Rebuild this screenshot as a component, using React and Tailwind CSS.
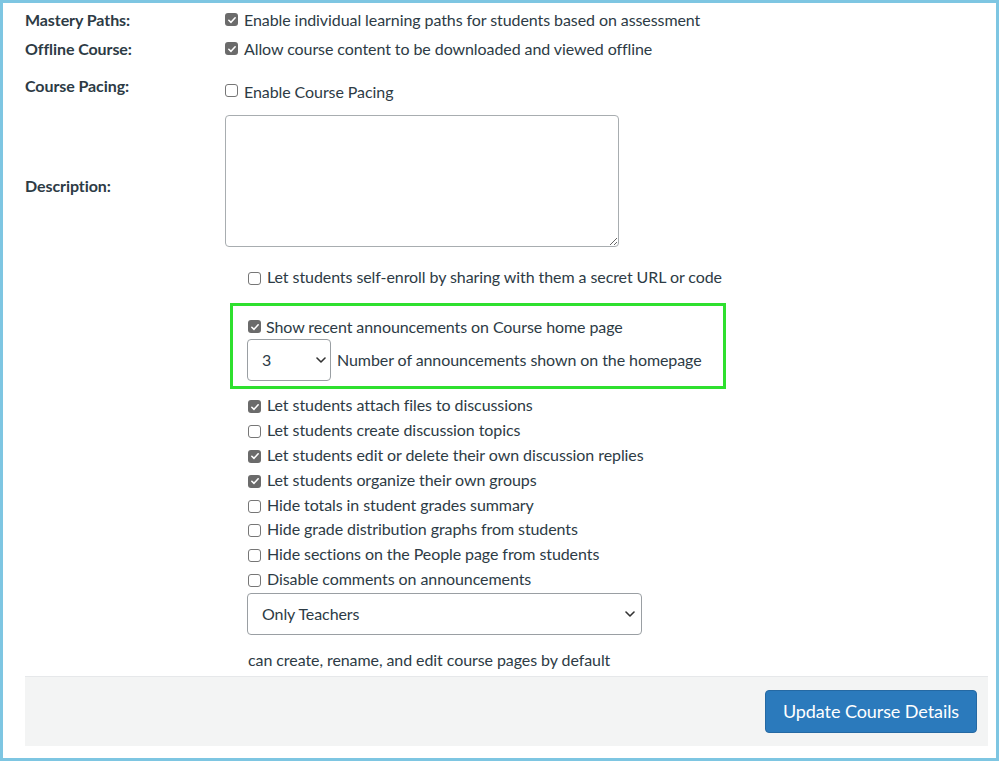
import React from 'react';

const font = { fontFamily: 'Lato, "Noto Sans", sans-serif' };

function Box({ checked }) {
  if (checked) {
    return (
      <span className="inline-flex w-[13px] h-[13px] shrink-0 items-center justify-center rounded-[3px] bg-[#6b6b6b]">
        <svg viewBox="0 0 12 12" className="w-[10px] h-[10px]">
          <path d="M2.2 6.3 4.8 8.8 9.8 3.3" fill="none" stroke="#fff" strokeWidth="1.9" strokeLinecap="round" strokeLinejoin="round" />
        </svg>
      </span>
    );
  }
  return <span className="inline-block w-[13px] h-[13px] shrink-0 rounded-[3px] border border-[#767676] bg-white" />;
}

function Chevron() {
  return (
    <svg viewBox="0 0 10 6" className="w-[10px] h-[6px]">
      <path d="M1 1 5 5 9 1" fill="none" stroke="#333" strokeWidth="1.6" strokeLinecap="round" strokeLinejoin="round" />
    </svg>
  );
}

const options = [
  ["Let students attach files to discussions", true],
  ["Let students create discussion topics", false],
  ["Let students edit or delete their own discussion replies", true],
  ["Let students organize their own groups", true],
  ["Hide totals in student grades summary", false],
  ["Hide grade distribution graphs from students", false],
  ["Hide sections on the People page from students", false],
  ["Disable comments on announcements", false],
];

export default function App() {
  return (
    <div style={font} className="w-[999px] h-[761px] bg-white border-[3px] border-[#7ec6e2] pl-[22px] text-[16px] tracking-[-0.08px] text-[#2d3b45] overflow-hidden">
      <div className="pt-[2px]">
        <div className="flex h-[29px] items-center">
          <div className="w-[200px] font-bold">Mastery Paths:</div>
          <div className="flex items-center gap-[6px]"><Box checked /><span>Enable individual learning paths for students based on assessment</span></div>
        </div>
        <div className="flex h-[29px] items-center">
          <div className="w-[200px] font-bold">Offline Course:</div>
          <div className="flex items-center gap-[6px]"><Box checked /><span>Allow course content to be downloaded and viewed offline</span></div>
        </div>
        <div className="flex mt-[11px]">
          <div className="w-[200px] font-bold leading-[24px]">Course Pacing:</div>
          <div className="flex items-center gap-[6px] pt-[6px] h-[30px]"><span className="-mt-[3px] flex"><Box /></span><span>Enable Course Pacing</span></div>
        </div>
        <div className="flex mt-[11px]">
          <div className="w-[200px] font-bold leading-[24px] mt-[59px]">Description:</div>
          <textarea className="w-[394px] h-[132px] rounded-[4px] border border-[#a8adb0] bg-white" />
        </div>
      </div>

      <div className="ml-[200px]">
        <div className="flex h-[25px] items-center gap-[6px] ml-[23px] mt-[17px]">
          <span className="mt-[3px] flex"><Box /></span>
          <span>Let students self-enroll by sharing with them a secret URL or code</span>
        </div>

        <div className="ml-[5px] mt-[14px] w-[496px] h-[86px] border-[3px] border-[#2ee02e] pl-[14px] pt-[8px]">
          <div className="flex h-[25px] items-center gap-[5px] ml-[1px]">
            <Box checked />
            <span>Show recent announcements on Course home page</span>
          </div>
          <div className="flex items-center gap-[6px]">
            <div className="w-[84px] h-[42px] rounded-[4px] border border-[#9a9fa3] bg-white flex items-center justify-between pl-[14px] pr-[4px]">
              <span>3</span>
              <Chevron />
            </div>
            <span>Number of announcements shown on the homepage</span>
          </div>
        </div>

        <div className="mt-[4px] ml-[23px]">
          {options.map(([label, on]) => (
            <div key={label} className="flex h-[24.8px] items-center gap-[6px]">
              <span className="mt-[3px] flex"><Box checked={on} /></span>
              <span>{label}</span>
            </div>
          ))}
        </div>

        <div className="ml-[22px] mt-[2px] w-[395px] h-[42px] rounded-[4px] border border-[#9a9fa3] bg-white flex items-center justify-between pl-[14px] pr-[6px]">
          <span>Only Teachers</span>
          <Chevron />
        </div>

        <div className="ml-[23px] mt-[13px] leading-[24px]">can create, rename, and edit course pages by default</div>
      </div>

      <div className="mt-[4px] w-[963px] h-[70px] bg-[#f3f4f4] border-t border-[#e6e8ea] flex items-center justify-end pr-[11px]">
        <button className="w-[212px] h-[43px] rounded-[4px] bg-[#2b7abc] border border-[#2569a3] text-white text-[18px]">Update Course Details</button>
      </div>
    </div>
  );
}
